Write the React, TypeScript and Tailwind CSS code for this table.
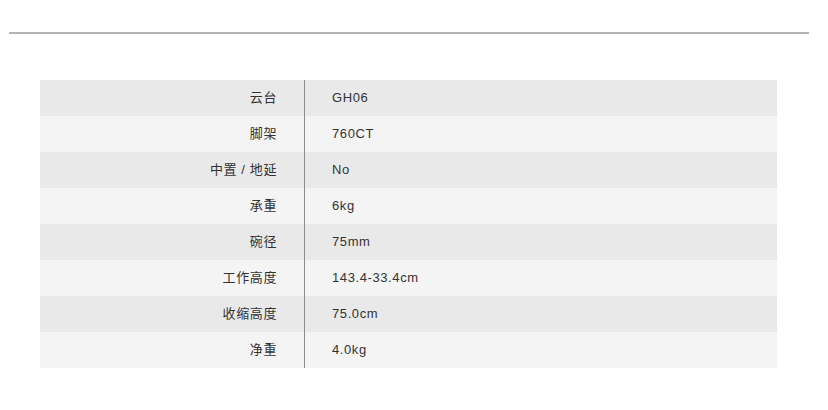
const specs = [
  { label: "云台", value: "GH06" },
  { label: "脚架", value: "760CT" },
  { label: "中置 / 地延", value: "No" },
  { label: "承重", value: "6kg" },
  { label: "碗径", value: "75mm" },
  { label: "工作高度", value: "143.4-33.4cm" },
  { label: "收缩高度", value: "75.0cm" },
  { label: "净重", value: "4.0kg" },
];

export default function App() {
  return (
    <div
      className="w-[828px] h-[410px] bg-white text-[#333] pt-[32px]"
      style={{ fontFamily: '"Liberation Sans", "Noto Sans CJK SC", sans-serif' }}
    >
      <div className="ml-[9px] mr-[19px] h-[2px] bg-[#b3b3b3]" />
      <div className="mx-[40px] mt-[46px] w-[737px]">
        {specs.map((s, i) => (
          <div
            key={s.label}
            className={`flex h-[36px] items-center text-[13px] tracking-[0.6px] ${
              i % 2 === 0 ? "bg-[#e9e9e9]" : "bg-[#f4f4f4]"
            }`}
          >
            <div className="w-[264px] pr-[27px] text-right">{s.label}</div>
            <div className="w-px h-full bg-[#8c8c8c]" />
            <div className="pl-[27px]">{s.value}</div>
          </div>
        ))}
      </div>
    </div>
  );
}
